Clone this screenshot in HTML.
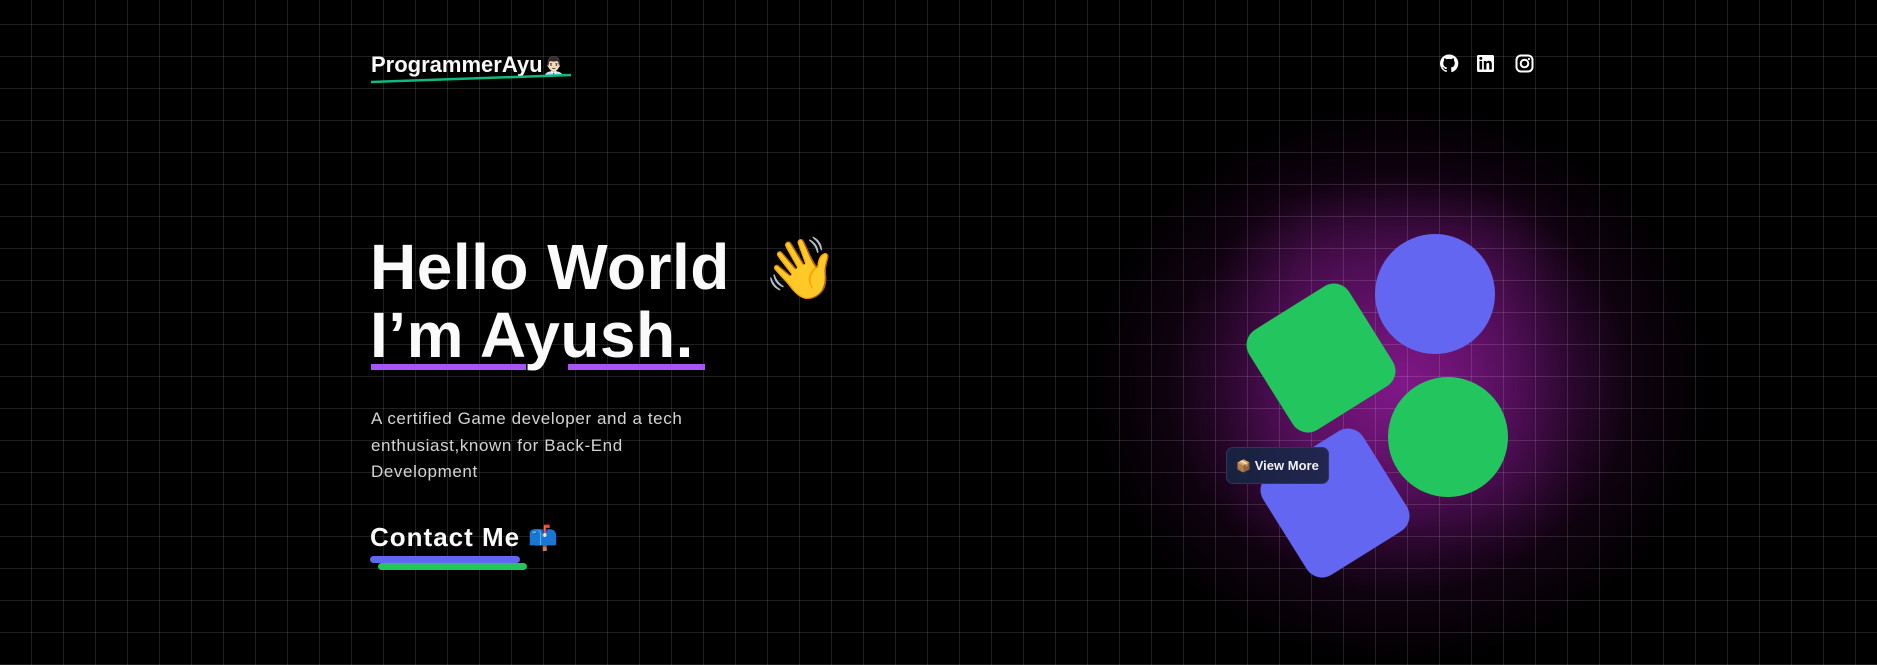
<!DOCTYPE html>
<html><head><meta charset="utf-8"><style>
html,body{margin:0;padding:0;width:1877px;height:665px;overflow:hidden;background:#000;font-family:"Liberation Sans",sans-serif;color:#fafafa}
.glow{position:absolute;left:0;top:0;width:1877px;height:665px;background:radial-gradient(ellipse 310px 280px at 1400px 385px,rgba(134,25,143,0.95) 0%,rgba(110,20,120,0.6) 40%,rgba(60,10,60,0.25) 75%,rgba(0,0,0,0) 100%)}
.box{position:absolute;left:1271px;top:219px;width:254px;height:283px;background:rgba(134,25,143,0.25);filter:blur(30px)}
.grid{position:absolute;left:0;top:0;width:1877px;height:665px;background-image:linear-gradient(to right,rgba(255,255,255,0.12) 1px,transparent 1px),linear-gradient(to bottom,rgba(255,255,255,0.12) 1px,transparent 1px);background-size:32px 32px;background-position:31px 24px}
.abs{position:absolute}
.logo{left:371px;top:52px;font-size:22px;font-weight:bold;white-space:nowrap}
h1{position:absolute;left:370px;top:234px;margin:0;font-size:64px;line-height:67px;font-weight:bold;white-space:nowrap;letter-spacing:0.5px}
p{position:absolute;left:371px;top:406px;margin:0;font-size:17px;line-height:26.5px;color:#d4d4d4;width:340px;letter-spacing:0.6px}
.contact{left:370px;top:522px;font-size:26px;font-weight:bold;white-space:nowrap;letter-spacing:1px}
.sq{position:absolute;width:118px;height:118px;border-radius:18px;transform:rotate(-32deg)}
.circ{position:absolute;width:120px;height:120px;border-radius:50%}
.btn{left:1226px;top:447px;width:101px;height:35px;border-radius:7px;background:linear-gradient(90deg,#18213e,#222650);border:1px solid #2c3560;font-size:13px;font-weight:bold;line-height:35px;text-align:center;color:#f2f2f2;white-space:nowrap}
</style></head><body>
<div class="glow"></div><div class="box"></div>
<div class="grid"></div>
<div class="abs logo">ProgrammerAyu<span style="font-family:'Noto Color Emoji',sans-serif;font-size:18px">👨🏻‍💼</span></div>
<svg class="abs" style="left:369px;top:72px" width="205" height="14"><line x1="2" y1="10" x2="202" y2="3" stroke="#10b981" stroke-width="2.5"/></svg>
<svg class="abs" style="left:1440px;top:54px" width="95" height="20" fill="#fff">
<path d="M9 0.5a9 9 0 0 0-2.85 17.54c.45.08.62-.2.62-.43v-1.6c-2.5.54-3.030-1.07-3.03-1.07-.4-1.04-1-1.32-1-1.32-.82-.56.06-.55.06-.55.9.06 1.38.93 1.38.93.8 1.38 2.1.98 2.62.75.08-.58.31-.98.57-1.2-2-.23-4.1-1-4.1-4.45 0-.98.35-1.79.93-2.420-.1-.23-.4-1.14.08-2.38 0 0 .76-.24 2.48.92a8.6 8.6 0 0 1 4.5 0c1.72-1.16 2.470-.92 2.47-.92.5 1.24.19 2.15.1 2.38.57.63.92 1.44.92 2.42 0 3.46-2.1 4.22-4.1 4.44.32.28.61.83.61 1.67v2.48c0 .24.16.52.62.43A9 9 0 0 0 9 .5z"/>
<rect x="37" y="1" width="17" height="17" rx="1.5"/>
<g fill="#000"><rect x="39.5" y="7" width="2.6" height="8.5"/><circle cx="40.8" cy="4.4" r="1.5"/><path d="M43.8 7h2.5v1.2c.4-.7 1.3-1.4 2.6-1.4 2.4 0 2.9 1.5 2.9 3.5v5.2h-2.6v-4.6c0-1.1-.2-2-1.3-2s-1.5.8-1.5 2v4.6h-2.6z"/></g>
<rect x="76.5" y="1.5" width="16" height="16" rx="4.5" fill="none" stroke="#fff" stroke-width="2"/><circle cx="84.5" cy="9.5" r="3.8" fill="none" stroke="#fff" stroke-width="2"/><circle cx="89" cy="5" r="1.1"/>
</svg>
<h1>Hello World<span style="font-family:'Noto Color Emoji',sans-serif;font-size:60px;margin-left:34px">👋</span><br>I’m Ayush.</h1>
<div class="abs" style="left:371px;top:364px;width:155px;height:6px;background:#a855f7"></div>
<div class="abs" style="left:568px;top:364px;width:137px;height:6px;background:#a855f7"></div>
<p>A certified Game developer and a tech enthusiast,known for Back-End Development</p>
<div class="abs contact">Contact Me <span style="font-family:'Noto Color Emoji',sans-serif;font-size:24px">📫</span></div>
<div class="abs" style="left:370px;top:556px;width:150px;height:7px;border-radius:4px;background:#6366f1"></div>
<div class="abs" style="left:378px;top:563px;width:149px;height:7px;border-radius:4px;background:#22c55e"></div>
<div class="circ" style="left:1375px;top:234px;background:#6366f1"></div>
<div class="circ" style="left:1388px;top:377px;background:#22c55e"></div>
<div class="sq" style="left:1262px;top:299px;background:#22c55e"></div>
<div class="sq" style="left:1276px;top:444px;background:#6366f1"></div>
<div class="abs btn"><span style="font-family:'Noto Color Emoji',sans-serif;font-size:12px">📦</span> View More</div>
</body></html>
